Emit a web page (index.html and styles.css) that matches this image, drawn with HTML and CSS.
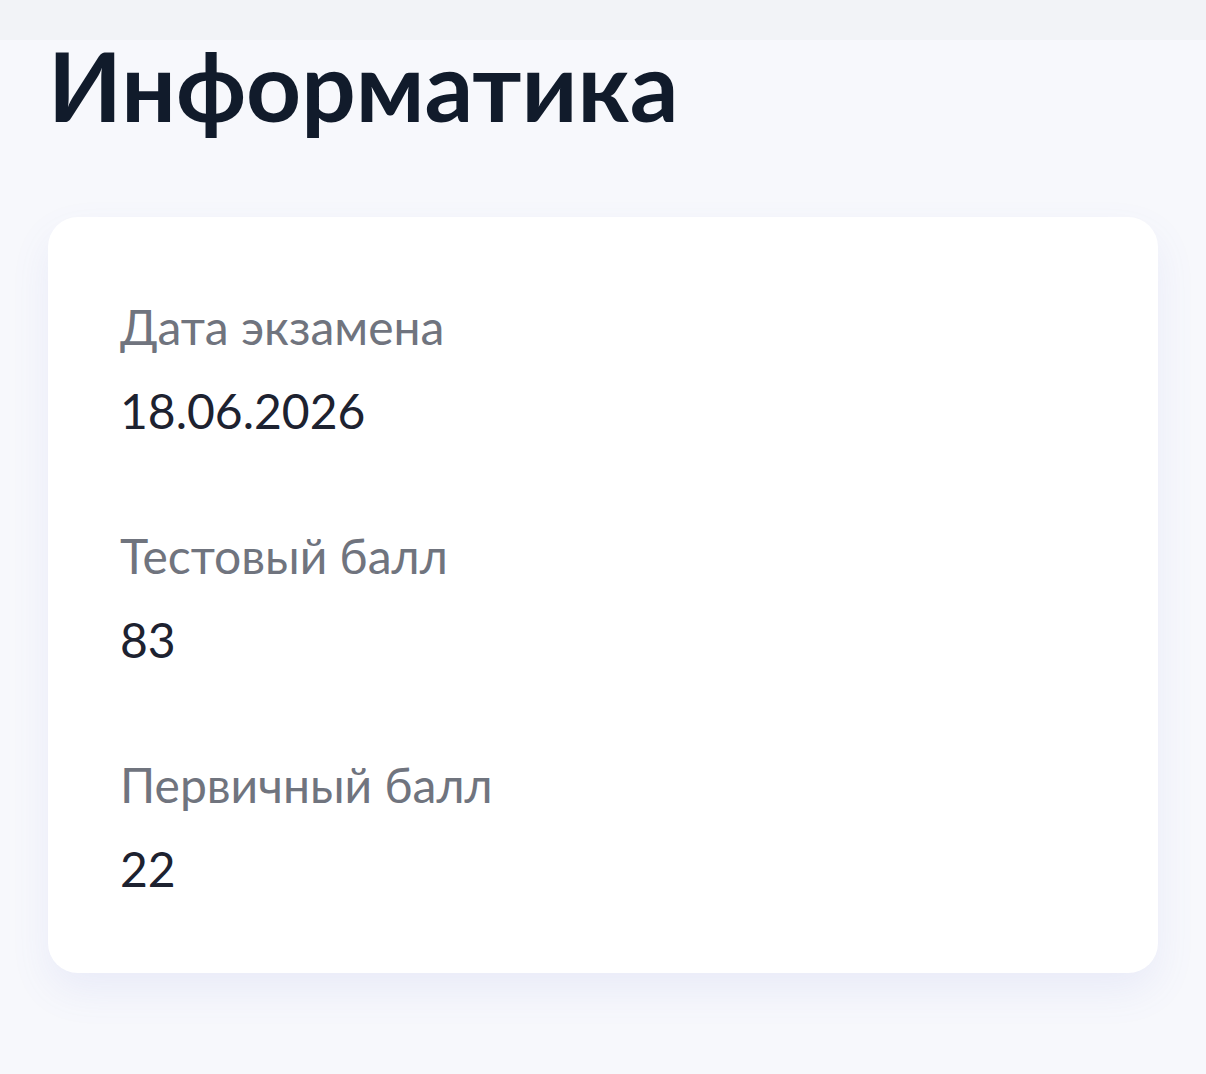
FILE: index.html
```html
<!DOCTYPE html>
<html lang="ru">
<head>
    <meta charset="UTF-8">
    <meta name="viewport" content="width=device-width, initial-scale=1.0">
    <title>Информатика</title>
    <link rel="stylesheet" href="styles.css">
</head>
<body>

<div class="top-bar"></div>

<div class="page">
    <h1 class="title">Информатика</h1>

    <div class="card">
        <div class="field">
            <div class="field-label">Дата экзамена</div>
            <div class="field-value">18.06.2026</div>
        </div>
        <div class="field">
            <div class="field-label">Тестовый балл</div>
            <div class="field-value">83</div>
        </div>
        <div class="field">
            <div class="field-label">Первичный балл</div>
            <div class="field-value">22</div>
        </div>
    </div>
</div>

</body>
</html>
```

FILE: styles.css
```css
body {
    font-family: Lato, "Noto Sans", sans-serif;
    margin: 0;
    background-color: #f7f8fc;
    min-height: 100vh;
}
.top-bar {
    height: 40px;
    background-color: #f2f3f7;
}
.page {
    padding: 0 48px;
}
.title {
    margin: 4px 0 91px;
    font-size: 96px;
    line-height: 82px;
    font-weight: 700;
    color: #111b2b;
}
.card {
    background-color: #ffffff;
    border-radius: 30px;
    padding: 80px 72px 74px;
    box-shadow: 0 18px 40px rgba(96, 110, 210, 0.09);
    display: flex;
    flex-direction: column;
    gap: 85px;
}
.field-label {
    font-size: 48px;
    line-height: 60px;
    color: #70747e;
}
.field-value {
    margin-top: 24px;
    font-size: 48px;
    line-height: 60px;
    color: #1d2230;
}
```
